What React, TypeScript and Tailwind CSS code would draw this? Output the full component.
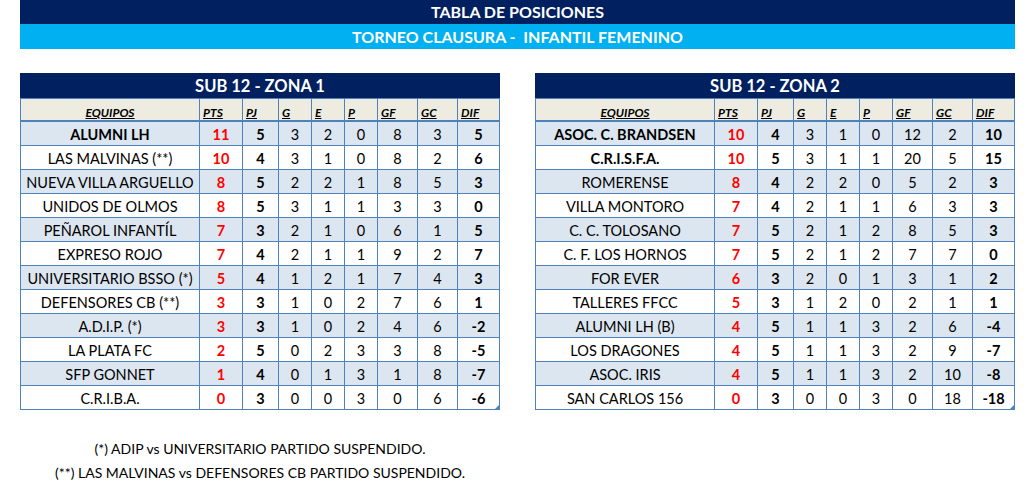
import React from "react";

type Row = [string, number, number, number, number, number, number, number, number, boolean?];

const zona1: Row[] = [
  ["ALUMNI LH", 11, 5, 3, 2, 0, 8, 3, 5, true],
  ["LAS MALVINAS (**)", 10, 4, 3, 1, 0, 8, 2, 6],
  ["NUEVA VILLA ARGUELLO", 8, 5, 2, 2, 1, 8, 5, 3],
  ["UNIDOS DE OLMOS", 8, 5, 3, 1, 1, 3, 3, 0],
  ["PEÑAROL INFANTÍL", 7, 3, 2, 1, 0, 6, 1, 5],
  ["EXPRESO ROJO", 7, 4, 2, 1, 1, 9, 2, 7],
  ["UNIVERSITARIO BSSO (*)", 5, 4, 1, 2, 1, 7, 4, 3],
  ["DEFENSORES CB (**)", 3, 3, 1, 0, 2, 7, 6, 1],
  ["A.D.I.P. (*)", 3, 3, 1, 0, 2, 4, 6, -2],
  ["LA PLATA FC", 2, 5, 0, 2, 3, 3, 8, -5],
  ["SFP GONNET", 1, 4, 0, 1, 3, 1, 8, -7],
  ["C.R.I.B.A.", 0, 3, 0, 0, 3, 0, 6, -6],
];

const zona2: Row[] = [
  ["ASOC. C. BRANDSEN", 10, 4, 3, 1, 0, 12, 2, 10, true],
  ["C.R.I.S.F.A.", 10, 5, 3, 1, 1, 20, 5, 15, true],
  ["ROMERENSE", 8, 4, 2, 2, 0, 5, 2, 3],
  ["VILLA MONTORO", 7, 4, 2, 1, 1, 6, 3, 3],
  ["C. C. TOLOSANO", 7, 5, 2, 1, 2, 8, 5, 3],
  ["C. F. LOS HORNOS", 7, 5, 2, 1, 2, 7, 7, 0],
  ["FOR EVER", 6, 3, 2, 0, 1, 3, 1, 2],
  ["TALLERES FFCC", 5, 3, 1, 2, 0, 2, 1, 1],
  ["ALUMNI LH (B)", 4, 5, 1, 1, 3, 2, 6, -4],
  ["LOS DRAGONES", 4, 5, 1, 1, 3, 2, 9, -7],
  ["ASOC. IRIS", 4, 5, 1, 1, 3, 2, 10, -8],
  ["SAN CARLOS 156", 0, 3, 0, 0, 3, 0, 18, -18],
];

const headers = ["PTS", "PJ", "G", "E", "P", "GF", "GC", "DIF"];
const gridCols = "grid grid-cols-[180px_43px_36px_33px_33px_33px_40px_40px_42px]";
const cell = "border-r border-b border-[#4f81bd] flex items-center justify-center pt-[4px]";

function Table({ title, rows }: { title: string; rows: Row[] }) {
  return (
    <div className="relative w-[480px]">
      <div className="h-[25px] bg-[#002060] text-white font-bold text-[16.5px] flex items-center justify-center pt-[1px]">
        {title}
      </div>
      <div className={`${gridCols} h-[24px] bg-[#eeece1] border-b-2 border-[#4f81bd]`}>
        <div className="border-l border-r border-t border-[#4f81bd] flex items-end justify-center pb-[1px] text-[12px] font-bold italic underline">
          EQUIPOS
        </div>
        {headers.map((h) => (
          <div
            key={h}
            className="border-r border-t border-[#4f81bd] flex items-end justify-start pl-[3px] pb-[1px] text-[12px] font-bold italic underline"
          >
            {h}
          </div>
        ))}
      </div>
      {rows.map((r, i) => {
        const bg = i % 2 === 0 ? "bg-[#dce6f1]" : "bg-white";
        return (
          <div key={r[0]} className={`${gridCols} h-[24px] ${bg}`}>
            <div className={`border-l ${cell} ${r[9] ? "font-bold" : ""}`}>{r[0]}</div>
            <div className={`${cell} font-bold text-[#ff0000]`}>{r[1]}</div>
            <div className={`${cell} font-bold`}>{r[2]}</div>
            {[r[3], r[4], r[5], r[6], r[7]].map((v, k) => (
              <div key={k} className={cell}>
                {v}
              </div>
            ))}
            <div className={`${cell} font-bold`}>{r[8]}</div>
          </div>
        );
      })}
      <div className="absolute right-[1px] bottom-[1px] w-0 h-0 border-l-[4px] border-l-transparent border-b-[4px] border-b-[#4f81bd]" />
    </div>
  );
}

export default function App() {
  return (
    <div
      className="w-[1033px] h-[487px] bg-white text-black text-[14.5px] leading-none"
      style={{ fontFamily: "Lato, 'Open Sans', sans-serif" }}
    >
      <div className="ml-[20px] w-[995px]">
        <div className="h-[24px] bg-[#002060] text-white font-bold text-[16px] flex items-center justify-center">
          TABLA DE POSICIONES
        </div>
        <div className="h-[25px] bg-[#00b0f0] text-white font-bold text-[16px] flex items-center justify-center whitespace-pre pt-[1px]">
          TORNEO CLAUSURA -  INFANTIL FEMENINO
        </div>
      </div>
      <div className="mt-[24px] ml-[20px] flex gap-[35px]">
        <Table title="SUB 12 - ZONA 1" rows={zona1} />
        <Table title="SUB 12 - ZONA 2" rows={zona2} />
      </div>
      <div className="ml-[20px] w-[480px] mt-[27px] flex flex-col items-center text-[14px] leading-[24px]">
        <div>(*) ADIP vs UNIVERSITARIO PARTIDO SUSPENDIDO.</div>
        <div>(**) LAS MALVINAS vs DEFENSORES CB PARTIDO SUSPENDIDO.</div>
      </div>
    </div>
  );
}
